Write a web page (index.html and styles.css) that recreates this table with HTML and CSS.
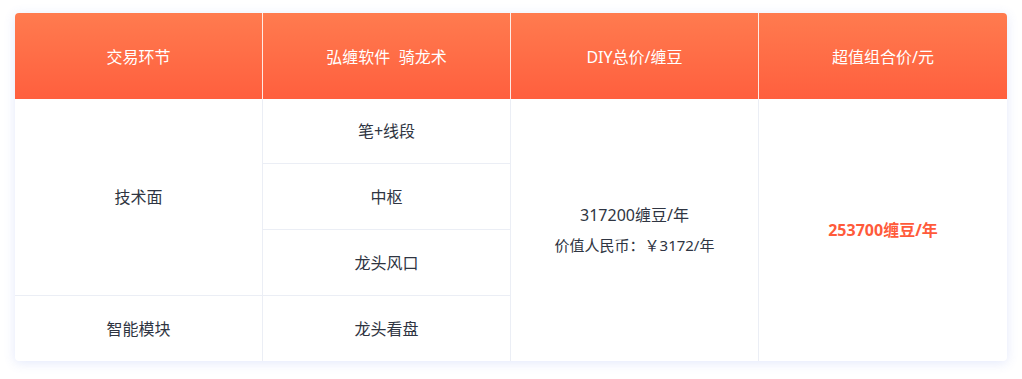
FILE: index.html
```html
<!DOCTYPE html>
<html lang="zh-CN">
<head>
<meta charset="utf-8">
<link rel="stylesheet" href="styles.css">
</head>
<body>
<div class="page">
  <div class="card">
    <div class="grid">
      <div class="cell head br">交易环节</div>
      <div class="cell head br">弘缠软件&nbsp;&nbsp;骑龙术</div>
      <div class="cell head br">DIY总价/缠豆</div>
      <div class="cell head">超值组合价/元</div>

      <div class="cell c1 r-tech br bb">技术面</div>
      <div class="cell c2 r2 br bb">笔+线段</div>
      <div class="cell c3 r-all br">
        <div class="price">317200缠豆/年</div>
        <div class="rmb">价值人民币：￥3172/年</div>
      </div>
      <div class="cell c4 r-all">
        <div class="deal">253700缠豆/年</div>
      </div>
      <div class="cell c2 r3 br bb">中枢</div>
      <div class="cell c2 r4 br bb">龙头风口</div>
      <div class="cell c1 r5 br">智能模块</div>
      <div class="cell c2 r5 br">龙头看盘</div>
    </div>
  </div>
</div>
</body>
</html>
```
FILE: styles.css
```css
* { box-sizing: border-box; }
html, body { margin: 0; padding: 0; background: #ffffff; }
body {
  font-family: "Noto Sans", "Noto Sans CJK SC", sans-serif;
  color: #2f3542;
}
.page {
  padding: 13px 15px 18px 15px;
  width: 1022px;
}
.card {
  width: 992px;
  border-radius: 4px;
  overflow: hidden;
  background: #fff;
  box-shadow: 0 2px 12px rgba(80, 110, 230, 0.16);
}
.grid {
  display: grid;
  grid-template-columns: repeat(4, 248px);
  grid-template-rows: 86px 65px 66px 66px 65px;
}
.cell {
  display: flex;
  flex-direction: column;
  align-items: center;
  justify-content: center;
  font-size: 16px;
  line-height: 20px;
  text-align: center;
}
.head {
  background: linear-gradient(180deg, #ff7b4f 0%, #ff5f3e 100%);
  color: #ffffff;
  font-size: 16px;
  padding-top: 2px;
}
.head.br { border-right: 1px solid rgba(255, 255, 255, 0.85); }
.br { border-right: 1px solid #ebeef5; }
.bb { border-bottom: 1px solid #ebeef5; }
.c1 { grid-column: 1; }
.c2 { grid-column: 2; }
.c3 { grid-column: 3; }
.c4 { grid-column: 4; }
.r-tech { grid-row: 2 / 5; }
.r2 { grid-row: 2; }
.r3 { grid-row: 3; }
.r4 { grid-row: 4; }
.r5 { grid-row: 5; }
.r-all { grid-row: 2 / 6; }
.price {
  font-size: 16px;
  line-height: 20px;
}
.rmb {
  margin-top: 10px;
  font-size: 15px;
  line-height: 20px;
}
.deal {
  color: #ff5a3a;
  font-weight: 700;
  font-size: 16px;
  line-height: 20px;
}
```
